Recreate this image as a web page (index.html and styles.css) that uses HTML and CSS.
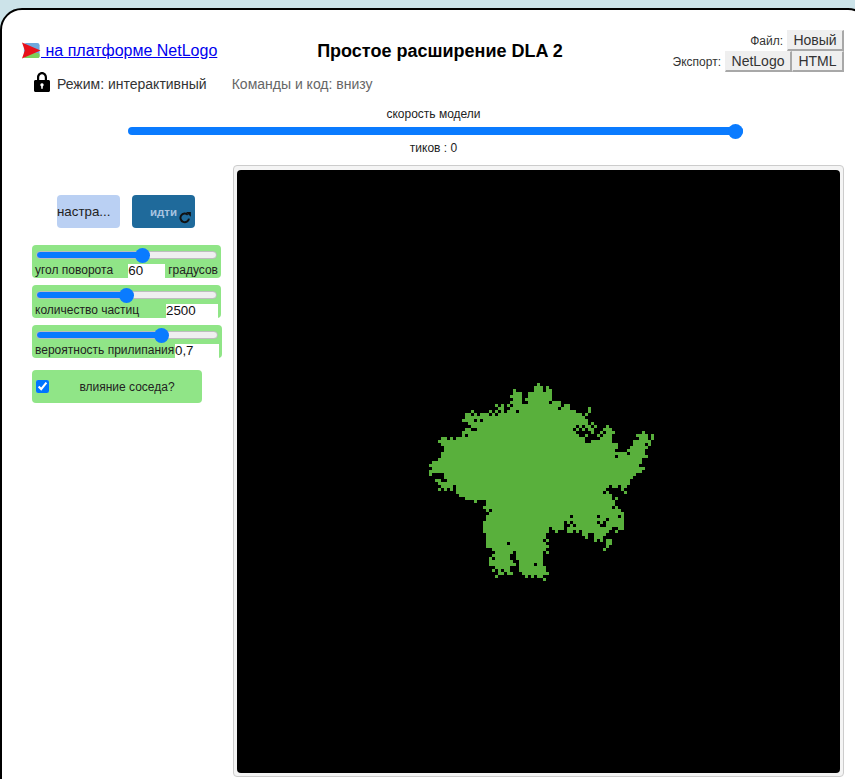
FILE: index.html
```html
<!DOCTYPE html>
<html lang="ru">
<head>
<meta charset="utf-8">
<title>Простое расширение DLA 2</title>
<link rel="stylesheet" href="styles.css">
</head>
<body>
<div class="panel">
  <header class="head">
    <a class="platform" href="#"><svg class="logo" width="19" height="17" viewBox="0 0 20 17"><rect x="2" y="0.5" width="16.5" height="16" rx="2.5" fill="#6fa8dc"/><rect x="2" y="11" width="16.5" height="5.5" rx="2" fill="#7ccf5a"/><polygon points="0,0 19.5,8.5 0,17 3,8.5" fill="#e8101a"/></svg> на платформе NetLogo</a>
    <h1 class="title">Простое расширение DLA 2</h1>
    <div class="files">
      <div class="file-row"><span class="file-label">Файл:</span><button class="file-btn btn-new">Новый</button></div>
      <div class="file-row"><span class="file-label">Экспорт:</span><button class="file-btn btn-nl">NetLogo</button><button class="file-btn btn-html">HTML</button></div>
    </div>
  </header>
  <div class="mode">
    <svg class="lock" width="16" height="20" viewBox="0 0 16 20"><path fill-rule="evenodd" d="M3 8V5.500C3 2.400 5.200 0 8 0s5 2.400 5 5.500V8h1.500c.8 0 1.500.7 1.500 1.500V18.500c0 .8-.7 1.500-1.500 1.500H1.500C.7 20 0 19.300 0 18.500V9.500C0 8.700.7 8 1.500 8H3zM5.200 8h5.600V5.500c0-1.800-1.200-3.200-2.800-3.200S5.200 3.700 5.200 5.500V8zM8 11.200a1.700 1.700 0 0 0-.8 3.200V16.800h1.600V14.400A1.700 1.700 0 0 0 8 11.200z"/></svg>
    <span class="mode-text">Режим: интерактивный</span>
    <span class="mode-hint">Команды и код: внизу</span>
  </div>
  <section class="speed">
    <span class="speed-label">скорость модели</span>
    <input class="range range-speed" type="range" min="0" max="100" value="100" style="--pct:100%">
    <span class="speed-label ticks">тиков : 0</span>
  </section>
  <main class="main">
    <aside class="controls">
      <div class="buttons">
        <button class="cmd cmd-setup">настра...</button>
        <button class="cmd cmd-go">идти<svg class="forever" width="12" height="12" viewBox="0 0 12 12"><path d="M10 6.600A4.300 4.300 0 1 1 8.800 2.800" fill="none" stroke="#111" stroke-width="2"/><polygon points="7,0 11.800,0 11.800,4.800" fill="#111"/></svg></button>
      </div>
      <div class="sliders">
        <div class="widget">
          <input class="range" type="range" min="0" max="100" value="60" style="--pct:60%">
          <div class="widget-row"><span class="widget-name">угол поворота</span><input class="num num-angle" value="60"><span class="unit">градусов</span></div>
        </div>
        <div class="widget">
          <input class="range" type="range" min="0" max="5000" value="2500" style="--pct:50%">
          <div class="widget-row"><span class="widget-name">количество частиц</span><input class="num num-count" value="2500"></div>
        </div>
        <div class="widget widget-wide">
          <input class="range" type="range" min="0" max="1" step="0.01" value="0.71" style="--pct:71%">
          <div class="widget-row"><span class="widget-name">вероятность прилипания</span><input class="num num-prob" value="0,7"></div>
        </div>
      </div>
      <label class="switch"><input class="check" type="checkbox" checked><span class="switch-name">влияние соседа?</span></label>
    </aside>
    <div class="frame">
      <div class="world">
        <svg class="patches" viewBox="0 0 201 201" width="603" height="603" shape-rendering="crispEdges">
          <path class="cluster" transform="translate(61 69)" d="M39 2.500H40
M38 3.500H41M42 3.500H43
M31 4.500H32M38 4.500H41M42 4.500H44
M31 5.500H34M36 5.500H44
M30 6.500H34M36 6.500H44
M31 7.500H34M35 7.500H44
M30 8.500H34M36 8.500H43M44 8.500H47
M25 9.500H26M27 9.500H28M29 9.500H30M31 9.500H47M48 9.500H50
M26 10.500H28M30 10.500H46M47 10.500H50M56 10.500H57
M17 11.500H18M23 11.500H24M25 11.500H26M27 11.500H28M29 11.500H32M33 11.500H52M56 11.500H57
M15 12.500H17M18 12.500H19M20 12.500H23M24 12.500H25M26 12.500H54M55 12.500H56
M15 13.500H55
M14 14.500H18M19 14.500H20M21 14.500H56
M16 15.500H56M57 15.500H58
M17 16.500H52M53 16.500H54M55 16.500H57M58 16.500H59M62 16.500H63
M15 17.500H17M19 17.500H51M52 17.500H53M54 17.500H55M56 17.500H58M61 17.500H64
M14 18.500H52M57 18.500H58M60 18.500H61M62 18.500H65M74 18.500H75
M14 19.500H15M16 19.500H53M55 19.500H56M59 19.500H60M61 19.500H64M72 19.500H76M77 19.500H78
M7 20.500H9M10 20.500H11M12 20.500H55M60 20.500H64M73 20.500H76M77 20.500H78
M6 21.500H55M57 21.500H64M71 21.500H77
M7 22.500H66M71 22.500H75M76 22.500H77
M8 23.500H66M70 23.500H76
M8 24.500H65M69 24.500H75
M7 25.500H69M70 25.500H75
M7 26.500H65M66 26.500H76
M6 27.500H74
M4 28.500H74
M3 29.500H73
M4 30.500H75
M3 31.500H74
M3 32.500H4M8 32.500H72
M8 33.500H71
M5 34.500H7M9 34.500H70
M6 35.500H70
M7 36.500H11M12 36.500H63M64 36.500H66M67 36.500H69
M6 37.500H7M8 37.500H9M10 37.500H11M12 37.500H62M67 37.500H68
M12 38.500H61M62 38.500H63M68 38.500H69
M13 39.500H64
M15 40.500H64M65 40.500H66
M18 41.500H19M22 41.500H65
M22 42.500H65
M21 43.500H64M65 43.500H66
M22 44.500H23M24 44.500H67
M23 45.500H68
M22 46.500H50M51 46.500H59M60 46.500H66M67 46.500H68
M22 47.500H62M63 47.500H68
M21 48.500H48M49 48.500H50M51 48.500H59M60 48.500H61M62 48.500H68
M21 49.500H48M50 49.500H51M52 49.500H60M62 49.500H68
M21 50.500H43M44 50.500H48M49 50.500H64M66 50.500H68
M21 51.500H43M45 51.500H46M49 51.500H51M52 51.500H53M54 51.500H63M65 51.500H66
M22 52.500H42M54 52.500H56M58 52.500H62
M22 53.500H42M55 53.500H56M58 53.500H61
M22 54.500H41M42 54.500H43M58 54.500H59M60 54.500H61M62 54.500H64
M22 55.500H29M30 55.500H42M62 55.500H64
M22 56.500H43M62 56.500H63
M24 57.500H42M61 57.500H62
M25 58.500H31M32 58.500H41M42 58.500H43
M24 59.500H30M32 59.500H41
M23 60.500H24M25 60.500H30M32 60.500H41
M23 61.500H31M33 61.500H41
M23 62.500H32M33 62.500H38M39 62.500H41
M25 63.500H30M33 63.500H42
M24 64.500H25M26 64.500H27M28 64.500H30M33 64.500H42
M26 65.500H28M29 65.500H31M34 65.500H43
M25 66.500H26M35 66.500H36M37 66.500H38M39 66.500H41
M41 67.500H42"/>
        </svg>
      </div>
    </div>
  </main>
</div>
</body>
</html>
```

FILE: styles.css
```css
* { box-sizing: border-box; }
html, body { margin: 0; height: 100%; }
body {
  background: #cce3e9;
  overflow: hidden;
  padding-top: 8px;
  font-family: "Liberation Sans", Arial, sans-serif;
  color: #222;
}
.panel {
  width: 870px;
  height: 800px;
  background: #fff;
  border: 2px solid #000;
  border-radius: 22px;
  padding-top: 20px;
}
.head {
  display: grid;
  grid-template-columns: 200px 436px 186px;
  align-items: center;
  padding-left: 20px;
  height: 42px;
}
.platform { font-size: 16px; color: #0000ee; white-space: nowrap; text-decoration: underline; }
.logo { vertical-align: -3px; }
.title { margin: 0; font-size: 18px; font-weight: bold; text-align: center; color: #000; }
.files { display: flex; flex-direction: column; align-items: flex-end; }
.file-row { display: flex; align-items: center; height: 21px; }
.file-label { font-size: 12px; color: #333; margin-right: 4px; }
.file-btn {
  height: 21px;
  padding: 0;
  font: 14px "Liberation Sans", Arial, sans-serif;
  color: #333;
  background: #efefef;
  border: 1px solid #efefef;
  border-right: 2px solid #a8a8a8;
  border-bottom: 2px solid #a8a8a8;
}
.btn-new { width: 57px; }
.btn-nl { width: 67px; }
.btn-html { width: 52px; }
.mode { display: flex; align-items: center; padding: 0 0 0 32px; height: 22px; font-size: 14px; }
.lock { flex: none; margin-top: -2px; }
.mode-text { margin-left: 7px; padding-top: 2px; color: #333; }
.mode-hint { margin-left: 25px; padding-top: 2px; color: #666; }
.speed {
  display: flex;
  flex-direction: column;
  align-items: center;
  width: 615px;
  margin: 13px 0 0 126px;
}
.speed-label { font-size: 12px; line-height: 14px; position: relative; left: -2px; }
.range {
  -webkit-appearance: none;
  appearance: none;
  display: block;
  background: transparent;
  margin: 0 1px -1px;
  width: calc(100% - 2px);
  height: 20px;
}
.range::-webkit-slider-runnable-track {
  height: 8px;
  border-radius: 4px;
  border: 1px solid #bdbdbd;
  background: linear-gradient(to right, #0a7bff var(--pct), #efefef var(--pct));
}
.range::-webkit-slider-thumb {
  -webkit-appearance: none;
  width: 15px;
  height: 15px;
  margin-top: -4.500px;
  border-radius: 50%;
  background: #0a7bff;
}
.range-speed { margin: 0; width: 100%; height: 20px; }
.range-speed::-webkit-slider-runnable-track { border: 0; }
.range-speed::-webkit-slider-thumb { margin-top: -3.500px; }
.main { display: flex; margin-top: 10px; align-items: flex-start; }
.controls { flex: none; width: 231px; padding: 30px 0 0 30px; }
.buttons { display: flex; gap: 12px; margin-left: 25px; }
.cmd {
  position: relative;
  width: 63px;
  height: 33px;
  padding: 0;
  border: 0;
  border-radius: 4px;
  text-align: left;
  font-family: "Liberation Sans", Arial, sans-serif;
}
.cmd-setup { background: #bad0f3; font-size: 13.330px; color: #222; }
.cmd-go { background: #1f6a9b; font-size: 11.500px; font-weight: bold; color: #a9c4e0; padding-left: 18px; }
.forever { position: absolute; left: 47px; top: 17px; }
.sliders { display: flex; flex-direction: column; gap: 7px; margin-top: 17px; }
.widget {
  width: 189px;
  height: 33px;
  padding: 0 3px;
  background: #90e587;
  border-radius: 4px;
}
.widget-wide { width: 190px; }
.widget-row { display: flex; height: 14px; font-size: 12px; line-height: 12px; }
.widget-name { margin-right: auto; white-space: nowrap; }
.unit { margin-left: 3px; white-space: nowrap; }
.num {
  height: 14px;
  padding: 0 0 2px;
  border: 0;
  background: #fff;
  font: 13.330px "Liberation Sans", Arial, sans-serif;
  color: #111;
}
.num-angle { width: 37px; }
.num-count { width: 52px; }
.num-prob { width: 44px; }
.switch {
  display: flex;
  align-items: center;
  width: 170px;
  height: 33px;
  margin-top: 12px;
  padding-left: 4px;
  background: #90e587;
  border-radius: 4px;
  font-size: 12px;
}
.check { width: 13px; height: 13px; margin: 0; flex: none; }
.switch-name { flex: 1; text-align: center; padding-left: 3px; }
.frame {
  flex: none;
  width: 611px;
  height: 612px;
  padding: 4px 3px 3px;
  background: #f4f4f4;
  border: 1px solid #ccc;
  border-radius: 4px;
}
.world { width: 603px; height: 603px; background: #000; border-radius: 4px; overflow: hidden; }
.patches { display: block; }
.cluster { fill: none; stroke: #59b03c; stroke-width: 1; }
```
